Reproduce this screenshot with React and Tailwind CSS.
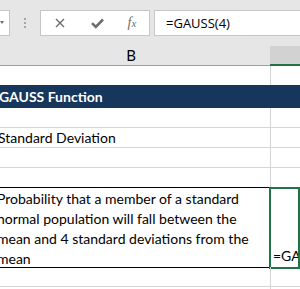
import React from "react";

const cellFont = { fontFamily: "Lato, 'Open Sans', sans-serif" };

export default function App() {
  return (
    <div className="w-[300px] h-[289px] overflow-hidden bg-white text-black" style={cellFont}>
      {/* formula bar area */}
      <div className="h-[46px] bg-[#e6e6e6] flex items-start pt-[10px]">
        <div className="w-[10px] h-[26px] bg-white border border-[#c6c6c6] border-l-0 relative">
          <svg className="absolute left-0 top-[9px]" width="5" height="5" viewBox="0 0 5 5">
            <path d="M0 1 L4 1 L2 4 Z" fill="#6d6d6d" />
          </svg>
        </div>
        <div className="w-[30px] h-[26px] flex flex-col items-center justify-center gap-[2px]">
          <div className="w-[2px] h-[2px] bg-[#a6a6a6]" />
          <div className="w-[2px] h-[2px] bg-[#a6a6a6]" />
          <div className="w-[2px] h-[2px] bg-[#a6a6a6]" />
        </div>
        <div className="w-[110px] h-[26px] bg-white border border-[#c6c6c6] flex items-center">
          <div className="w-[38px] flex justify-center">
            <svg width="10" height="10" viewBox="0 0 10 10">
              <path d="M1 1 L9 9 M9 1 L1 9" stroke="#6d6d6d" strokeWidth="1.4" />
            </svg>
          </div>
          <div className="w-[36px] flex justify-center">
            <svg width="13" height="11" viewBox="0 0 13 11">
              <path d="M1 5.2 L4.8 9 L12 1.5" stroke="#6d6d6d" strokeWidth="2.6" fill="none" />
            </svg>
          </div>
          <div className="w-[34px] flex justify-center">
            <span
              className="text-[14px] italic text-[#6d6d6d] leading-none"
              style={{ fontFamily: "'Liberation Serif', serif" }}
            >
              f<span className="text-[11px]">x</span>
            </span>
          </div>
        </div>
        <div className="w-[4px]" />
        <div className="flex-1 h-[26px] bg-white border border-[#c6c6c6] border-r-0 flex items-center pl-[11px]">
          <span className="text-[13px] leading-none" style={{ fontFamily: "'Open Sans', sans-serif" }}>
            =GAUSS(4)
          </span>
        </div>
      </div>

      {/* column headers */}
      <div className="flex h-[20px] -ml-[8px] border-b border-[#9e9e9e]">
        <div className="w-[278px] bg-[#e6e6e6] flex items-center justify-center text-[15px] leading-none">
          B
        </div>
        <div className="flex-1 bg-[#d2d2d2] border-b-2 border-[#217346] -mb-px" />
      </div>

      {/* grid rows */}
      <div className="-ml-[8px]">
        <div className="flex h-[19px]">
          <div className="w-[278px]" />
          <div className="flex-1 border-l border-[#d4d4d4]" />
        </div>
        <div className="h-[23px] bg-[#16365c] flex items-center pl-[7px]">
          <span className="text-white font-bold text-[14px] leading-none">GAUSS Function</span>
        </div>
        <div className="flex h-[20px]">
          <div className="w-[278px] border-b border-[#d4d4d4]" />
          <div className="flex-1 border-l border-b border-[#d4d4d4]" />
        </div>
        <div className="flex h-[20px]">
          <div className="w-[278px] border-b border-[#d4d4d4] flex items-center pl-[6px] text-[14px] leading-none">
            Standard Deviation
          </div>
          <div className="flex-1 border-l border-b border-[#d4d4d4]" />
        </div>
        <div className="flex h-[20px]">
          <div className="w-[278px] border-b border-[#d4d4d4]" />
          <div className="flex-1 border-l border-b border-[#d4d4d4]" />
        </div>
        <div className="flex h-[20px]">
          <div className="w-[278px] border-b border-black" />
          <div className="flex-1 border-l border-[#d4d4d4]" />
        </div>
        <div className="flex h-[80px]">
          <div className="w-[278px] border-b border-black pl-[5px] pt-[1px] text-[14px] leading-[20px]">
            Probability that a member of a standard normal population will fall between the mean and 4 standard
            deviations from the mean
          </div>
          <div className="flex-1 -mt-[1px] -ml-[1px] h-[82px] border-2 border-[#217346] flex items-end pl-[2px] pb-[1px] text-[14px] leading-[20px] overflow-hidden whitespace-nowrap">
            =GAUSS(4)
          </div>
        </div>
        <div className="flex h-[20px] -mt-[1px]">
          <div className="w-[278px] border-b border-[#d4d4d4]" />
          <div className="flex-1 border-l border-b border-[#d4d4d4]" />
        </div>
        <div className="flex h-[20px]">
          <div className="w-[278px]" />
          <div className="flex-1 border-l border-[#d4d4d4]" />
        </div>
      </div>
    </div>
  );
}
